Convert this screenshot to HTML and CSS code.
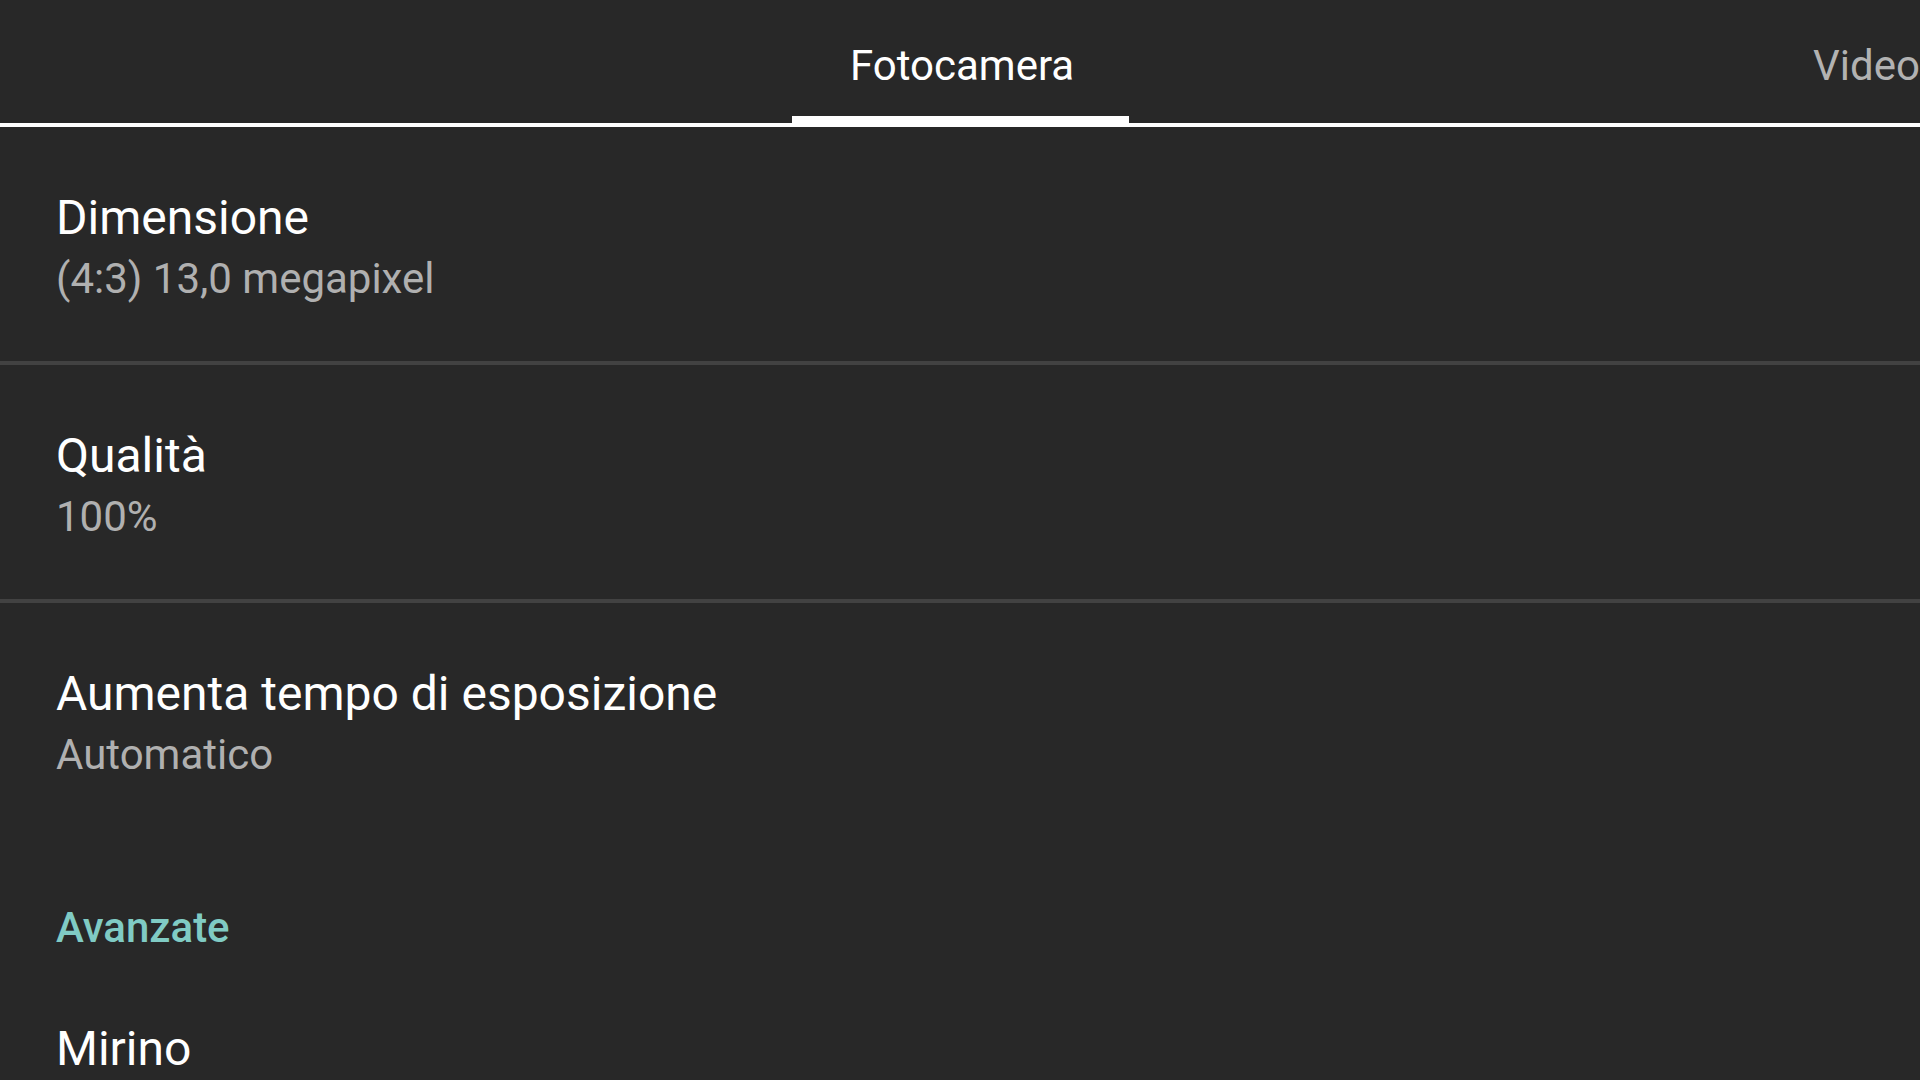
FILE: index.html
```html
<!DOCTYPE html>
<html lang="it">
<head>
<meta charset="utf-8">
<title>Impostazioni fotocamera</title>
<link rel="stylesheet" href="styles.css">
</head>
<body>
<div class="screen">
  <div class="tabs">
    <div class="tab active">Fotocamera</div>
    <div class="tab other">Video</div>
  </div>
  <div class="list">
    <div class="row divided">
      <div class="title">Dimensione</div>
      <div class="summary">(4:3) 13,0 megapixel</div>
    </div>
    <div class="row divided">
      <div class="title">Qualità</div>
      <div class="summary">100%</div>
    </div>
    <div class="row">
      <div class="title">Aumenta tempo di esposizione</div>
      <div class="summary">Automatico</div>
    </div>
    <div class="category">Avanzate</div>
    <div class="row">
      <div class="title">Mirino</div>
    </div>
  </div>
</div>
</body>
</html>
```
FILE: styles.css
```css
html, body {
  margin: 0;
  padding: 0;
  background: #282828;
}
.screen {
  width: 1920px;
  height: 1080px;
  overflow: hidden;
  background: #282828;
  font-family: Roboto, "Noto Sans", sans-serif;
}
.tabs {
  display: flex;
  height: 123px;
  border-bottom: 4px solid #ffffff;
  box-sizing: content-box;
  overflow: hidden;
}
.tab {
  font-size: 42px;
  line-height: 42px;
  padding-top: 45px;
  box-sizing: border-box;
  height: 123px;
  white-space: nowrap;
}
.tab.active {
  color: #ffffff;
  margin-left: 792px;
  padding-left: 58px;
  padding-right: 58px;
  width: 337px;
  text-align: center;
  border-bottom: 7px solid #ffffff;
}
.tab.other {
  color: #b2b2b2;
  margin-left: 684px;
}
.list {
  display: flex;
  flex-direction: column;
}
.row {
  padding: 67px 0 61px 56px;
  display: flex;
  flex-direction: column;
}
.row.divided {
  border-bottom: 4px solid #424242;
}
.title {
  color: #ffffff;
  font-size: 48px;
  line-height: 48px;
}
.summary {
  color: #b0b0b0;
  font-size: 42px;
  line-height: 42px;
  margin-top: 16px;
}
.category {
  color: #80cbc4;
  font-size: 42px;
  line-height: 42px;
  font-weight: 500;
  padding: 70px 0 0 56px;
  height: 42px;
}
.category + .row {
  padding-top: 76px;
}
```
